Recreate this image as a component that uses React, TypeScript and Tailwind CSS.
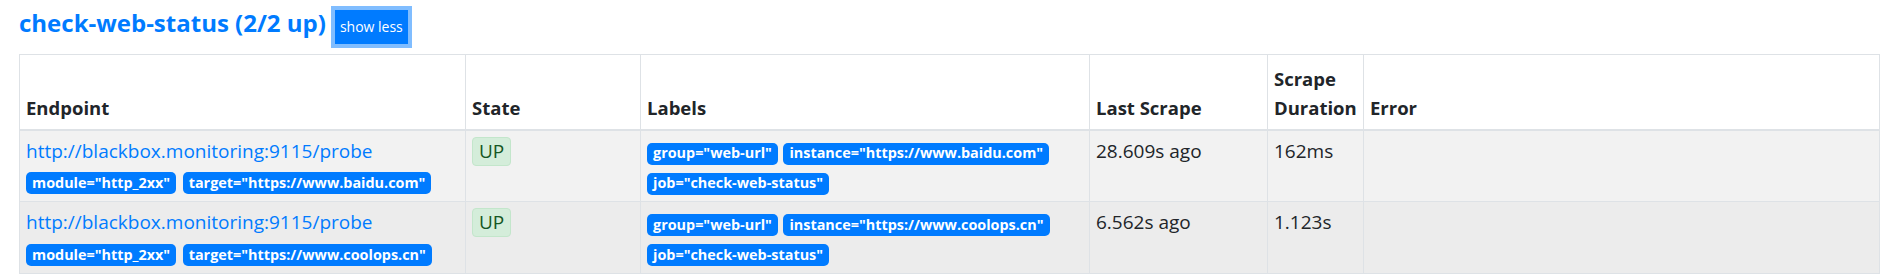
// Prometheus · Targets — un job expandido con sus endpoints.
const targets = [
  {
    endpoint: 'http://blackbox.monitoring:9115/probe',
    params: ['module="http_2xx"', 'target="https://www.baidu.com"'],
    labels: ['group="web-url"', 'instance="https://www.baidu.com"', 'job="check-web-status"'],
    lastScrape: '28.609s ago',
    duration: '162ms',
    bg: 'bg-[#f2f2f2]',
  },
  {
    endpoint: 'http://blackbox.monitoring:9115/probe',
    params: ['module="http_2xx"', 'target="https://www.coolops.cn"'],
    labels: ['group="web-url"', 'instance="https://www.coolops.cn"', 'job="check-web-status"'],
    lastScrape: '6.562s ago',
    duration: '1.123s',
    bg: 'bg-[#ececec]',
  },
]

const th = 'border border-[#dee2e6] border-b-2 px-[6px] py-[6px] align-bottom text-left font-bold text-[18.5px] leading-[28.8px]'
const td = 'border border-[#dee2e6] px-[6px] py-[6px] align-top text-[19px] leading-[28.8px]'

function Badge({ children }: { children: React.ReactNode }) {
  return (
    <span className="inline-flex items-center h-[22px] px-[6px] rounded-[5px] bg-[#007bff] text-white text-[14.4px] font-bold leading-none whitespace-nowrap">
      {children}
    </span>
  )
}

export default function App() {
  return (
    <div className="bg-white min-h-screen pl-[19px] pt-[9px] text-[#212529]"
      style={{ fontFamily: '"Open Sans", "Liberation Sans", sans-serif' }}>
      <div className="flex items-baseline">
        <a href="#" className="text-[24px] leading-[28.8px] font-bold text-[#007bff]">
          check-web-status (2/2 up)
        </a>
        <button className="ml-[9px] h-[34px] leading-[34px] px-[5px] bg-[#007bff] text-white text-[14px] ring-4 ring-[#80bdff]">
          show less
        </button>
      </div>

      <table className="mt-[10px] table-fixed border-collapse w-[1861px]">
        <thead>
          <tr className="h-[75px]">
            <th className={`${th} w-[446px]`}>Endpoint</th>
            <th className={`${th} w-[175px]`}>State</th>
            <th className={`${th} w-[449px]`}>Labels</th>
            <th className={`${th} w-[178px]`}>Last Scrape</th>
            <th className={`${th} w-[96px]`}>Scrape Duration</th>
            <th className={th}>Error</th>
          </tr>
        </thead>
        <tbody>
          {targets.map((t, i) => (
            <tr key={i} className={`${t.bg} h-[72px]`}>
              <td className={td}>
                <a href="#" className="text-[#007bff] block">{t.endpoint}</a>
                <div className="flex flex-wrap gap-[6.5px] mt-[7px]">
                  {t.params.map(p => <Badge key={p}>{p}</Badge>)}
                </div>
              </td>
              <td className={td}>
                <span className="inline-block px-[6px] h-[29px] leading-[27px] border border-[#c3e6cb] bg-[#d4edda] text-[#155724] rounded-[4px]">
                  UP
                </span>
              </td>
              <td className={td}>
                <div className="flex flex-wrap gap-x-[5.5px] gap-y-[8px] mt-[6px]">
                  {t.labels.map(l => <Badge key={l}>{l}</Badge>)}
                </div>
              </td>
              <td className={td}>{t.lastScrape}</td>
              <td className={td}>{t.duration}</td>
              <td className={td}></td>
            </tr>
          ))}
        </tbody>
      </table>
    </div>
  )
}
